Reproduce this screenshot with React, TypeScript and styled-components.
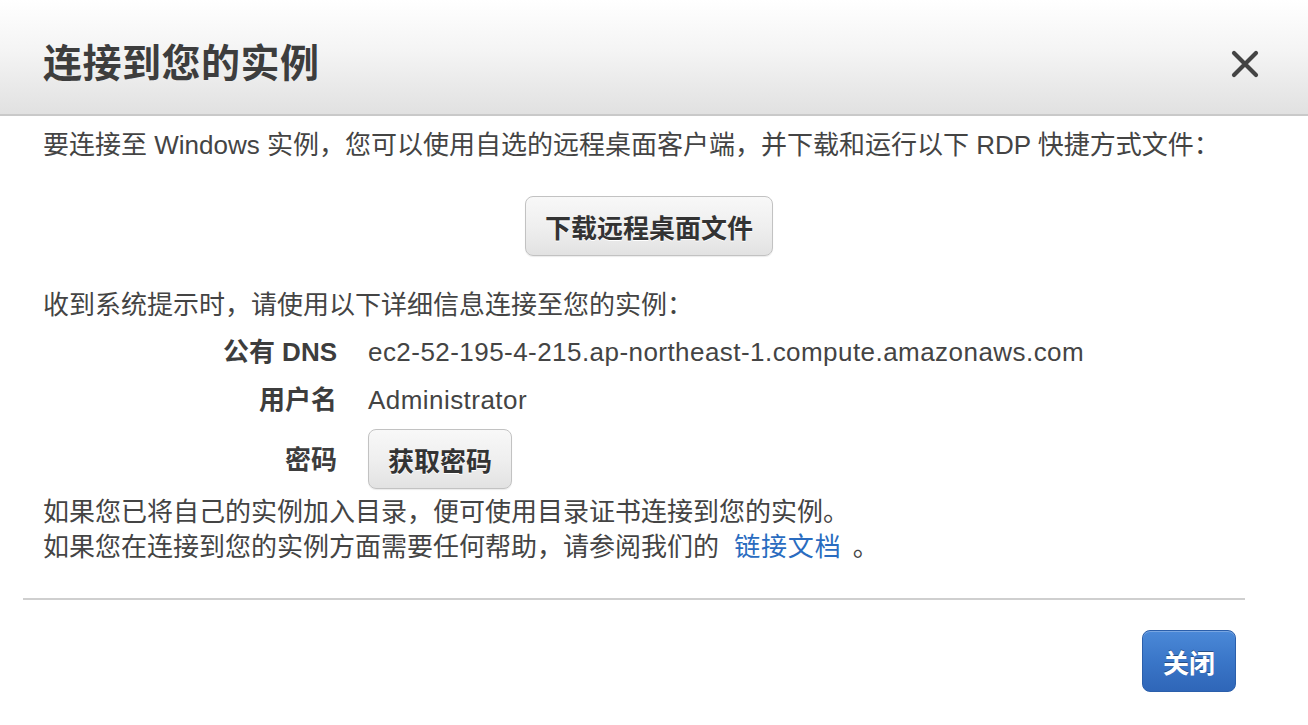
import React from 'react'
import styled, { createGlobalStyle } from 'styled-components'

const GlobalStyle = createGlobalStyle`
  body {
    margin: 0;
    background: #ffffff;
    font-family: "Liberation Sans", "Noto Sans CJK SC", sans-serif;
    color: #444444;
  }
`

const Modal = styled.div`
  width: 1308px;
  height: 725px;
  background: #ffffff;
  display: flex;
  flex-direction: column;
  overflow: hidden;
`

const Header = styled.div`
  height: 116px;
  box-sizing: border-box;
  border-bottom: 2px solid #c9c9c9;
  background: linear-gradient(to bottom, #ffffff 0%, #f4f4f4 45%, #e1e1e1 100%);
  display: flex;
  align-items: center;
  justify-content: space-between;
  padding: 6px 48px 0 43px;
`

const Title = styled.h1`
  margin: 0;
  font-size: 39px;
  font-weight: bold;
  color: #3d3d3d;
  letter-spacing: 0.5px;
`

const CloseIcon = styled.button`
  border: none;
  background: transparent;
  padding: 0;
  margin-top: 8px;
  width: 30px;
  height: 30px;
  cursor: pointer;
  display: flex;
  align-items: center;
  justify-content: center;
`

const Body = styled.div`
  padding: 11px 53px 0 43px;
  display: flex;
  flex-direction: column;
  font-size: 26px;
  line-height: 36px;
`

const Text = styled.p`
  margin: 0;
`

const ButtonRow = styled.div`
  display: flex;
  justify-content: center;
  margin: 33px 0 31px;
`

const GrayButton = styled.button`
  font-family: inherit;
  font-size: 26px;
  font-weight: bold;
  color: #333333;
  height: 60px;
  padding: 0 19px;
  border: 1px solid #c2c2c2;
  border-radius: 8px;
  background: linear-gradient(to bottom, #f8f8f8 0%, #eeeeee 55%, #e2e2e2 100%);
  box-shadow: 0 1px 1px rgba(0, 0, 0, 0.08);
  text-shadow: 0 1px 0 #ffffff;
`

const Details = styled.div`
  display: grid;
  grid-template-columns: 294px auto;
  column-gap: 31px;
  row-gap: 12px;
  align-items: center;
  margin: 11px 0 6px;
`

const Label = styled.div`
  text-align: right;
  font-weight: bold;
  color: #3d3d3d;
`

const Value = styled.div<{ $tight?: boolean }>`
  justify-self: start;
  letter-spacing: 0.45px;
  margin-top: ${({ $tight }) => ($tight ? '-1px' : '0')};
`

const Notes = styled.div`
  line-height: 35px;
`

const Link = styled.a`
  color: #2a6cc0;
  text-decoration: none;
  margin: 0 4px 0 8px;
  letter-spacing: 0.8px;
`

const Divider = styled.hr`
  margin: 33px 0 0 23px;
  width: 1222px;
  border: none;
  border-top: 2px solid #cfcfcf;
`

const Footer = styled.div`
  display: flex;
  justify-content: flex-end;
  padding: 30px 72px 0 0;
`

const PrimaryButton = styled.button`
  font-family: inherit;
  font-size: 26px;
  font-weight: bold;
  color: #ffffff;
  width: 94px;
  height: 62px;
  border: 1px solid #2b5fab;
  border-radius: 8px;
  background: linear-gradient(to bottom, #4b89d8 0%, #3a76c8 50%, #2f66b8 100%);
  text-shadow: 0 -1px 0 rgba(0, 0, 0, 0.35);
  box-shadow: inset 0 1px 0 rgba(255, 255, 255, 0.25);
`

export default function App() {
  return (
    <>
      <GlobalStyle />
      <Modal>
        <Header>
          <Title>连接到您的实例</Title>
          <CloseIcon aria-label="close">
            <svg width="28" height="28" viewBox="0 0 28 28">
              <path d="M3 3 L25 25 M25 3 L3 25" stroke="#444" strokeWidth="4.2" strokeLinecap="round" />
            </svg>
          </CloseIcon>
        </Header>
        <Body>
          <Text>要连接至 Windows 实例，您可以使用自选的远程桌面客户端，并下载和运行以下 RDP 快捷方式文件：</Text>
          <ButtonRow>
            <GrayButton>下载远程桌面文件</GrayButton>
          </ButtonRow>
          <Text>收到系统提示时，请使用以下详细信息连接至您的实例：</Text>
          <Details>
            <Label>公有 DNS</Label>
            <Value>ec2-52-195-4-215.ap-northeast-1.compute.amazonaws.com</Value>
            <Label>用户名</Label>
            <Value>Administrator</Value>
            <Label>密码</Label>
            <Value $tight>
              <GrayButton>获取密码</GrayButton>
            </Value>
          </Details>
          <Notes>
            <Text>如果您已将自己的实例加入目录，便可使用目录证书连接到您的实例。</Text>
            <Text>
              如果您在连接到您的实例方面需要任何帮助，请参阅我们的 <Link href="#">链接文档</Link> 。
            </Text>
          </Notes>
        </Body>
        <Divider />
        <Footer>
          <PrimaryButton>关闭</PrimaryButton>
        </Footer>
      </Modal>
    </>
  )
}
